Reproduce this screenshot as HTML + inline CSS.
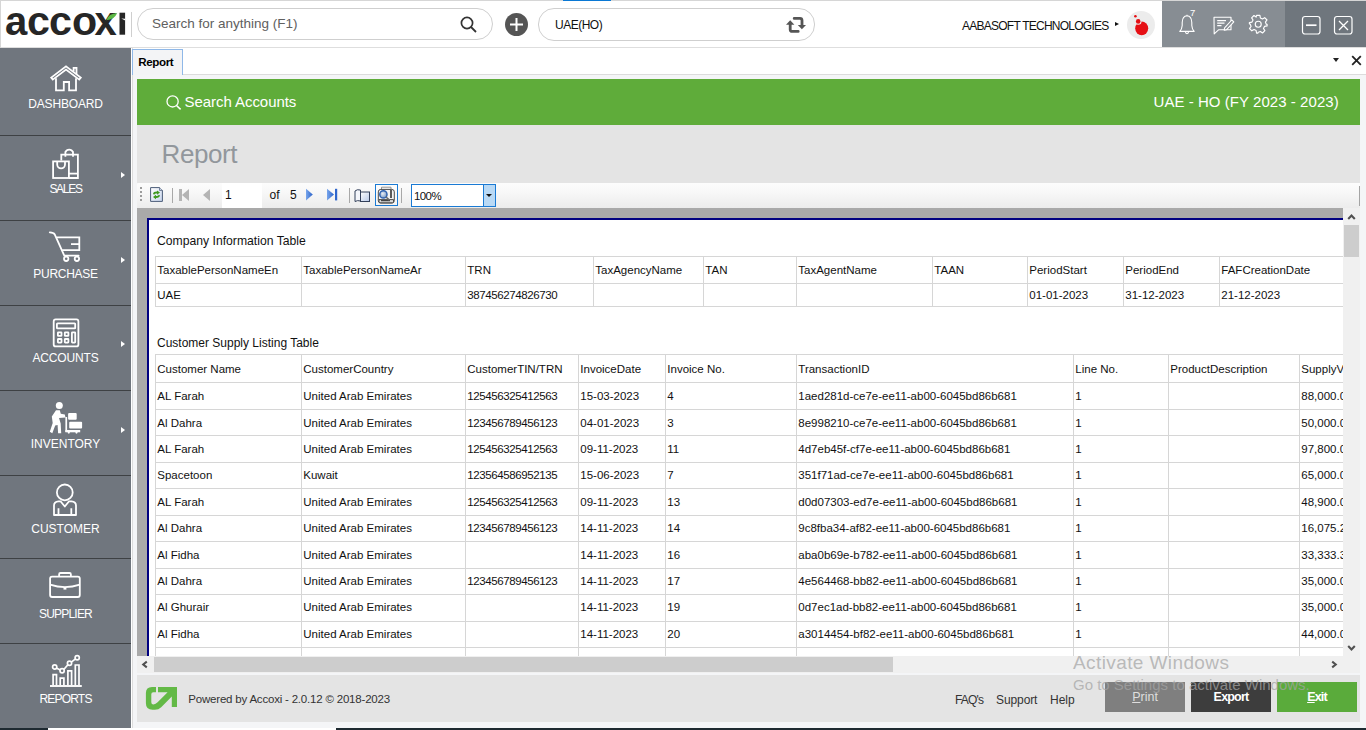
<!DOCTYPE html>
<html><head><meta charset="utf-8">
<style>
*{margin:0;padding:0;box-sizing:border-box}
html,body{width:1366px;height:730px;overflow:hidden;background:#fff;font-family:"Liberation Sans",sans-serif;color:#222}
.a{position:absolute}
#hdr{left:0;top:0;width:1366px;height:48px;background:#fff;border-top:1px solid #d6d6d6;border-bottom:1px solid #dedede}
#side{left:0;top:48px;width:131px;height:680px;background:#70767e}
.si{position:absolute;left:0;width:131px;height:85px;color:#fff;text-align:center;font-size:12px}
.dv{position:absolute;left:0;width:131px;height:1px;background:#3e4144}
.lbl{position:absolute;left:0;width:131px;text-align:center;font-size:12px;color:#fff;line-height:12px}
.arr{position:absolute;left:120.8px;width:0;height:0;border-top:3.8px solid transparent;border-bottom:3.8px solid transparent;border-left:4.8px solid #fff}
.cell{position:absolute;font-size:11.5px;color:#111;white-space:nowrap;line-height:12px}
</style></head><body>
<!-- HEADER -->
<div id="hdr" class="a"></div>
<div class="a" style="left:0;top:0;width:1px;height:48px;background:#d6d6d6"></div>
<div class="a" style="left:563px;top:0;width:48px;height:1px;background:#0a78d4"></div>
<!-- logo -->
<div class="a" style="left:4.9px;top:-3px;font:700 40px/48px 'Liberation Sans',sans-serif;color:#262626">a</div>
<div class="a" style="left:27.3px;top:-3px;font:700 40px/48px 'Liberation Sans',sans-serif;color:#262626;transform:scaleX(1.03);transform-origin:left">c</div>
<div class="a" style="left:49.3px;top:-3px;font:700 40px/48px 'Liberation Sans',sans-serif;color:#262626;transform:scaleX(1.03);transform-origin:left">c</div>
<div class="a" style="left:71.5px;top:-3px;font:700 40px/48px 'Liberation Sans',sans-serif;color:#262626;transform:scaleX(1.03);transform-origin:left">o</div>
<div class="a" style="left:94.4px;top:-3px;font:700 40px/48px 'Liberation Sans',sans-serif;color:#262626">x</div>
<svg class="a" style="left:100px;top:8px" width="30" height="30" viewBox="100 8 30 30">
 <path d="M106.3 20.2 Q108.5 13.5 117.2 13 Q114.5 19.6 106.3 20.2 Z" fill="#5cb845"/>
 <rect x="119.5" y="12.7" width="5.6" height="22" fill="#262626"/>
 <path d="M121.3 18.4 L125.2 18.8 V20.6 Z" fill="#fff"/>
</svg>
<div class="a" style="left:131px;top:12px;width:1px;height:25px;background:#cfcfcf"></div>
<!-- search -->
<div class="a" style="left:137px;top:8px;width:356px;height:32px;border:1px solid #cfcfcf;border-radius:16px"></div>
<div class="a" style="left:152px;top:16px;font-size:13.5px;color:#606060;line-height:16px">Search for anything (F1)</div>
<svg class="a" style="left:460px;top:16px" width="18" height="17" viewBox="0 0 18 17"><circle cx="7" cy="7" r="5.6" fill="none" stroke="#333" stroke-width="1.7"/><line x1="11" y1="11" x2="16" y2="16" stroke="#333" stroke-width="1.8"/></svg>
<!-- plus -->
<svg class="a" style="left:505px;top:13px" width="23" height="23" viewBox="0 0 23 23"><circle cx="11.5" cy="11.5" r="11.5" fill="#555"/><rect x="5" y="10.5" width="13" height="2" fill="#fff"/><rect x="10.5" y="5" width="2" height="13" fill="#fff"/></svg>
<!-- branch -->
<div class="a" style="left:538px;top:8px;width:277px;height:33px;border:1px solid #cfcfcf;border-radius:16px"></div>
<div class="a" style="left:555px;top:18px;font-size:12px;color:#111;line-height:14px;letter-spacing:-0.5px">UAE(HO)</div>
<svg class="a" style="left:782px;top:12px" width="28" height="26" viewBox="0 0 28 26">
 <path d="M16.2 19.4 H10.2 Q8.2 19.4 8.2 17.4 V12" fill="none" stroke="#555" stroke-width="2.8" stroke-linecap="round"/>
 <path d="M4 12.8 L8.2 8.2 L12.4 12.8 Z" fill="#555"/>
 <path d="M12.2 6.4 H18 Q20 6.4 20 8.4 V13.5" fill="none" stroke="#555" stroke-width="2.8" stroke-linecap="round"/>
 <path d="M15.8 13 L24 13 L19.9 17.3 Z" fill="#555"/>
</svg>
<!-- company -->
<div class="a" style="left:962px;top:18.5px;font-size:12px;color:#111;line-height:14px;letter-spacing:-0.75px">AABASOFT TECHNOLOGIES</div>
<div class="a" style="left:1115px;top:22px;width:0;height:0;border-top:2.5px solid transparent;border-bottom:2.5px solid transparent;border-left:4px solid #111"></div>
<div class="a" style="left:1127px;top:11px;width:28px;height:28px;border-radius:50%;background:#ececec"></div>
<svg class="a" style="left:1127px;top:11px" width="28" height="28" viewBox="0 0 28 28"><ellipse cx="14.7" cy="17.3" rx="6.5" ry="6.9" fill="#e60f14"/><circle cx="11.2" cy="10.4" r="3.3" fill="#ececec"/><circle cx="11.2" cy="10.4" r="2.3" fill="#e60f14"/><circle cx="8.4" cy="5.2" r="1.3" fill="#e60f14"/></svg>
<!-- right panels -->
<div class="a" style="left:1162px;top:1px;width:123px;height:46px;background:#878d93"></div>
<div class="a" style="left:1285px;top:1px;width:81px;height:46px;background:#6f767d"></div>
<svg class="a" style="left:1176px;top:12px" width="22" height="24" viewBox="0 0 22 24" fill="none" stroke="#fff" stroke-width="1.1">
 <path d="M11 3.8 Q15.6 4.2 15.8 10.5 V13.5 Q16 17 18.2 19.4 H3.8 Q6 17 6.2 13.5 V10.5 Q6.4 4.2 11 3.8 Z" stroke-linejoin="round"/>
 <path d="M11 2.8 V3.8 M9.4 19.6 Q9.6 21.6 11 21.6 Q12.4 21.6 12.6 19.6"/>
</svg>
<div class="a" style="left:1190px;top:7.5px;font-size:9.5px;line-height:9.5px;color:#fff">7</div>
<svg class="a" style="left:1212px;top:15px" width="24" height="22" viewBox="0 0 24 22" fill="none" stroke="#fff" stroke-width="1.1">
 <path d="M2 2.2 H19 V14.8 H6.5 L2.2 18.8 Z" stroke-linejoin="round"/>
 <path d="M5.2 5.6 H14 M5.2 8.1 H12.5 M5.2 10.6 H9.5" stroke-width="1.3"/>
 <path d="M12.6 12.8 L19.8 5 L21.8 6.9 L14.6 14.6 L12.2 15.2 Z" fill="#878d93" stroke-linejoin="round"/>
</svg>
<svg class="a" style="left:1248.3px;top:14.2px" width="20.5" height="20.5" viewBox="0 0 22 22" fill="none" stroke="#fff" stroke-width="1.25">
 <path d="M9.2 1.5 H12.8 L13.3 4.3 L15.5 5.4 L17.9 3.9 L20.4 6.4 L18.7 8.7 L19.6 11 L20.5 11 L20.5 11 L20.5 12.8 L17.7 13.3 L16.6 15.5 L18.1 17.9 L15.6 20.4 L13.3 18.7 L11 19.6 L10.5 20.5 L9.2 20.5 L8.7 17.7 L6.5 16.6 L4.1 18.1 L1.6 15.6 L3.3 13.3 L2.4 11 L1.5 10.5 L1.5 9.2 L4.3 8.7 L5.4 6.5 L3.9 4.1 L6.4 1.6 L8.7 3.3 Z" stroke-linejoin="round"/>
 <circle cx="11" cy="11" r="3.2"/>
</svg>
<svg class="a" style="left:1301px;top:15px" width="21" height="21" viewBox="0 0 21 21" fill="none" stroke="#fff" stroke-width="1.2">
 <rect x="1.5" y="1.5" width="17.5" height="17.5" rx="2.5"/>
 <path d="M5 10.2 H15.5" stroke-width="1.7"/>
</svg>
<svg class="a" style="left:1333px;top:15px" width="21" height="21" viewBox="0 0 21 21" fill="none" stroke="#fff" stroke-width="1.2">
 <rect x="1.5" y="1.5" width="17.5" height="17.5" rx="2.5"/>
 <path d="M6 6 L15 15 M15 6 L6 15" stroke-width="1.3"/>
</svg>

<!-- SIDEBAR -->
<div id="side" class="a"></div>
<!-- SIDEBAR ITEMS -->
<div class="dv" style="top:135px"></div>
<div class="dv" style="top:220px"></div>
<div class="dv" style="top:305px"></div>
<div class="dv" style="top:390px"></div>
<div class="dv" style="top:475px"></div>
<div class="dv" style="top:558px"></div>
<div class="dv" style="top:643px"></div>
<svg class="a" style="left:44px;top:60px" width="44" height="40" viewBox="0 0 44 40" fill="none" stroke="#fff" stroke-width="1.8">
 <path d="M7.2 17.6 L22 6.3 L36.8 17.6 L35.2 19.6 L22 9.6 L8.8 19.6 Z" stroke-linejoin="miter"/>
 <path d="M29.6 11.6 V7.8 H32.5 V14"/>
 <path d="M12 18.2 V30.4 H19.8 V22 H25.1 V30.4 H32 V18.2"/>
</svg>
<div class="lbl" style="top:98px;letter-spacing:-0.15px">DASHBOARD</div>

<svg class="a" style="left:44px;top:143px" width="44" height="40" viewBox="0 0 44 40" fill="none" stroke="#fff" stroke-width="1.8">
 <path d="M17.3 17.5 V11.6 H33.9 V35 H24.9"/>
 <path d="M21.4 13.7 V9 A4.2 4.2 0 0 1 29 9 V13.7"/>
 <rect x="9.1" y="18.4" width="15.8" height="16.6"/>
 <path d="M13.2 18.4 V21.5 A3.9 3.9 0 0 0 21 21.5 V18.4"/>
 <path d="M24.9 30.6 H33.9"/>
</svg>
<div class="lbl" style="top:183px;letter-spacing:-1.3px">SALES</div>
<div class="arr" style="top:171.6px"></div>

<svg class="a" style="left:44px;top:226px" width="44" height="40" viewBox="0 0 44 40" fill="none" stroke="#fff" stroke-width="1.8" stroke-linecap="round">
 <path d="M5.8 6.4 Q9.6 6.6 10.6 8.2 L20.3 29.6 H34.6" stroke-linejoin="round"/>
 <path d="M12.4 11.4 H35.3 V24.2 H18.2" stroke-linecap="butt"/>
 <path d="M27 18.1 H35.3" stroke-linecap="butt"/>
 <circle cx="22.2" cy="32.8" r="2.2"/>
 <circle cx="32.9" cy="32.8" r="2.2"/>
</svg>
<div class="lbl" style="top:267.5px;letter-spacing:-0.3px">PURCHASE</div>
<div class="arr" style="top:256.5px"></div>

<svg class="a" style="left:44px;top:313px" width="44" height="40" viewBox="0 0 44 40" fill="none" stroke="#fff" stroke-width="1.8">
 <rect x="9.7" y="6.4" width="24.7" height="27" rx="2"/>
 <rect x="12.9" y="10.4" width="18.3" height="4.9" rx="0.6"/>
 <rect x="13.9" y="19.3" width="3.6" height="3.6" rx="0.5"/>
 <rect x="20.8" y="19.3" width="3.6" height="3.6" rx="0.5"/>
 <rect x="13.9" y="26" width="3.6" height="3.6" rx="0.5"/>
 <rect x="20.8" y="26" width="3.6" height="3.6" rx="0.5"/>
 <rect x="27.9" y="19.3" width="3.3" height="10.3" rx="0.5"/>
</svg>
<div class="lbl" style="top:352px;letter-spacing:-0.15px">ACCOUNTS</div>
<div class="arr" style="top:341.4px"></div>

<svg class="a" style="left:44px;top:396px" width="44" height="40" viewBox="0 0 44 40" fill="#fff" stroke="none">
 <circle cx="15.3" cy="9.4" r="3.5"/>
 <path d="M12 14.2 L15.8 14.2 L16.8 17.8 L20.8 18.5 L21.5 21.5 L15 22 L16.7 27.5 L17.2 37.2 L14.1 37.2 L13.6 29 L11.2 29.5 L8.3 37.3 L5.8 35.8 L8.7 27 L7.8 20.5 Z"/>
 <rect x="21.4" y="21" width="1.7" height="15"/>
 <rect x="24.1" y="17" width="8.6" height="6.8" rx="1"/>
 <rect x="25.2" y="25.8" width="12.9" height="6.8" rx="1"/>
 <rect x="21.4" y="34" width="14.8" height="2.3"/>
 <circle cx="24.8" cy="36.6" r="1.1"/>
 <circle cx="32.5" cy="36.6" r="1.1"/>
</svg>
<div class="lbl" style="top:437.5px;letter-spacing:0px">INVENTORY</div>
<div class="arr" style="top:427px"></div>

<svg class="a" style="left:44px;top:480px" width="44" height="40" viewBox="0 0 44 40" fill="none" stroke="#fff" stroke-width="1.8">
 <circle cx="20.8" cy="12.4" r="7.9"/>
 <path d="M10 35 V25.5 Q10 21.6 14.5 21.3 H16.5 L20.8 26.5 L25.1 21.3 H27.5 Q32 21.6 32 25.5 V35 Z" stroke-linejoin="round"/>
 <path d="M14.5 28.2 V35 M27.3 28.2 V35"/>
</svg>
<div class="lbl" style="top:522.5px;letter-spacing:0px">CUSTOMER</div>

<svg class="a" style="left:44px;top:565px" width="44" height="40" viewBox="0 0 44 40" fill="none" stroke="#fff" stroke-width="1.8">
 <rect x="6.1" y="11.6" width="29.7" height="20.4" rx="2"/>
 <path d="M15.1 11.4 V9.4 Q15.1 8 16.5 8 H25.5 Q26.9 8 26.9 9.4 V11.4"/>
 <path d="M6.1 19.6 Q20.9 24.6 35.8 19.6"/>
 <rect x="19.5" y="22" width="2.9" height="2.6" fill="#fff" stroke="none"/>
</svg>
<div class="lbl" style="top:607.5px;letter-spacing:-0.8px">SUPPLIER</div>

<svg class="a" style="left:44px;top:650px" width="44" height="40" viewBox="0 0 44 40" fill="none" stroke="#fff" stroke-width="1.7">
 <path d="M6 36 H37.8" stroke-width="1.9"/>
 <path d="M9.1 35 V24.6 H12.5 V35"/>
 <path d="M16.2 35 V28.2 H19.9 V35"/>
 <path d="M23.9 35 V20.8 H27.6 V35"/>
 <path d="M31.3 35 V15 H35 V35"/>
 <path d="M12.3 18 L16.3 19.9 M19.8 19.5 L23.9 14.7 M27.3 12.1 L31.5 8.9"/>
 <circle cx="10.7" cy="17" r="2.1"/>
 <circle cx="18.1" cy="20.8" r="2.1"/>
 <circle cx="25.5" cy="13.2" r="2.1"/>
 <circle cx="33.2" cy="7.7" r="2.1"/>
</svg>
<div class="lbl" style="top:692.5px;letter-spacing:-0.8px">REPORTS</div>


<!-- MAIN -->
<div class="a" style="left:131px;top:48px;width:1px;height:680px;background:#fff"></div>
<div class="a" style="left:132px;top:48px;width:1px;height:680px;background:#dcdcdc"></div>
<div class="a" style="left:133px;top:48px;width:1233px;height:680px;background:#f4f5f7"></div>
<!-- tab strip -->
<div class="a" style="left:133px;top:48px;width:1233px;height:27px;background:#fff;border-bottom:1px solid #dcdcdc"></div>
<div class="a" style="left:132px;top:49px;width:51px;height:26px;background:#f3f4f6;border:1px solid #8fb8e8;border-bottom:none"></div>
<div class="a" style="left:138.3px;top:55.6px;font-size:11.6px;font-weight:700;color:#000;line-height:12px;letter-spacing:-0.4px">Report</div>
<div class="a" style="left:1332.5px;top:58px;width:0;height:0;border-left:3.5px solid transparent;border-right:3.5px solid transparent;border-top:4px solid #222"></div>
<svg class="a" style="left:1351px;top:55px" width="11" height="11" viewBox="0 0 11 11" stroke="#222" stroke-width="1.8"><path d="M1.2 1.2 L9.8 9.8 M9.8 1.2 L1.2 9.8"/></svg>

<!-- green bar -->
<div class="a" style="left:137px;top:79px;width:1223px;height:46px;background:#5fac3a"></div>
<svg class="a" style="left:165px;top:94px" width="18" height="17" viewBox="0 0 18 17" fill="none" stroke="#fff" stroke-width="1.3"><circle cx="7.6" cy="7.4" r="5.6"/><line x1="11.5" y1="11.5" x2="15.6" y2="15.4" stroke-width="1.5"/></svg>
<div class="a" style="left:184.5px;top:93.8px;font-size:15px;line-height:15px;color:#fff;letter-spacing:-0.05px">Search Accounts</div>
<div class="a" style="left:1153.5px;top:94.2px;font-size:15px;line-height:15px;color:#fff;letter-spacing:0.05px">UAE - HO (FY 2023 - 2023)</div>
<!-- gray area -->
<div class="a" style="left:137px;top:125px;width:1223px;height:58px;background:#e4e4e4"></div>
<div class="a" style="left:161.5px;top:139.3px;font-size:26px;color:#92979c;line-height:30px;letter-spacing:-0.4px">Report</div>
<!-- toolbar -->
<div class="a" style="left:137px;top:183px;width:1223px;height:25px;background:linear-gradient(#fcfcfc,#f7f7f7 40%,#ececec);border-radius:2px 0 0 0"></div>
<div class="a" style="left:1359px;top:186px;width:1px;height:20px;background:#a4a4a4"></div>
<div class="a" style="left:140px;top:187px;width:2px;height:2px;background:#9c9c9c;box-shadow:0 4px 0 #9c9c9c,0 8px 0 #9c9c9c,0 12px 0 #9c9c9c"></div>
<svg class="a" style="left:150px;top:187px" width="14" height="16" viewBox="0 0 14 16">
 <defs><linearGradient id="dg" x1="0" y1="0" x2="1" y2="1"><stop offset="0" stop-color="#ffffff"/><stop offset="1" stop-color="#c9d6ee"/></linearGradient></defs>
 <path d="M0.6 0.6 H9.6 L12.4 3.4 V14.4 H0.6 Z" fill="url(#dg)" stroke="#4b5c78" stroke-width="1"/>
 <path d="M9.6 0.6 V3.4 H12.4" fill="#dfe6f3" stroke="#4b5c78" stroke-width="0.8"/>
 <path d="M3 7 Q3.5 4.5 7 4.6 L7 3.4 L10 5.6 L7 7.8 L7 6.5 Q4.5 6.4 4.3 7.8 Z" fill="#3f9a1f"/>
 <path d="M10 8.6 Q9.5 11.1 6 11 L6 12.2 L3 10 L6 7.8 L6 9.1 Q8.5 9.2 8.7 7.8 Z" fill="#3f9a1f"/>
</svg>
<div class="a" style="left:172px;top:188px;width:1px;height:14.5px;background:#a8a8a8"></div>
<div class="a" style="left:179px;top:188.5px;width:3px;height:12px;background:#b4b4b4"></div>
<div class="a" style="left:182px;top:188.5px;width:0;height:0;border-top:6px solid transparent;border-bottom:6px solid transparent;border-right:7px solid #b4b4b4"></div>
<div class="a" style="left:203px;top:188.8px;width:0;height:0;border-top:6px solid transparent;border-bottom:6px solid transparent;border-right:7px solid #b4b4b4"></div>
<div class="a" style="left:222px;top:183px;width:40px;height:25px;background:#fff"></div>
<div class="a" style="left:225px;top:189px;font-size:12px;line-height:12px;color:#111">1</div>
<div class="a" style="left:269.5px;top:189px;font-size:12px;line-height:12px;color:#111">of</div>
<div class="a" style="left:290px;top:189px;font-size:12px;line-height:12px;color:#111">5</div>
<svg class="a" style="left:305px;top:188px" width="34" height="14" viewBox="0 0 34 14">
 <defs><linearGradient id="bg1" x1="0" y1="0" x2="1" y2="0"><stop offset="0" stop-color="#7aa7ec"/><stop offset="1" stop-color="#2a62c9"/></linearGradient></defs>
 <path d="M1 0.8 L7.8 6.6 L1 12.4 Z" fill="url(#bg1)"/>
 <path d="M22 0.8 L29 6.6 L22 12.4 Z" fill="url(#bg1)"/>
 <rect x="30" y="0.8" width="2.2" height="11.6" fill="#2f66cc"/>
</svg>
<div class="a" style="left:349px;top:188px;width:1px;height:14.5px;background:#a8a8a8"></div>
<svg class="a" style="left:354px;top:188px" width="17" height="15" viewBox="0 0 17 15">
 <defs><linearGradient id="bk" x1="0" y1="0" x2="1" y2="1"><stop offset="0" stop-color="#ffffff"/><stop offset="1" stop-color="#b8c9e8"/></linearGradient></defs>
 <path d="M1 3 Q3 1 6.5 2 V13 Q3.5 12 1 13.5 Z" fill="#f4f6fb" stroke="#33405a" stroke-width="1"/>
 <rect x="6.5" y="4" width="9" height="9.5" fill="url(#bk)" stroke="#33405a" stroke-width="1"/>
</svg>
<div class="a" style="left:375px;top:184px;width:23px;height:22px;border:1px solid #1a7ad4;background:rgba(255,255,255,0.4)"></div>
<svg class="a" style="left:376px;top:185px" width="21" height="20" viewBox="0 0 21 20">
 <defs><radialGradient id="lg" cx="0.4" cy="0.4" r="0.6"><stop offset="0" stop-color="#e8eef6"/><stop offset="1" stop-color="#7f9cc4"/></radialGradient></defs>
 <path d="M5.5 5 V2.2 H15 V5" fill="#f6f6f6" stroke="#8a8a8a" stroke-width="0.9"/>
 <rect x="2.3" y="4.4" width="16" height="13.6" rx="2.5" fill="#f3f3f3" stroke="#4a4a4a" stroke-width="1"/>
 <path d="M3 14.6 H17.5 V16.8 Q17.5 17.8 16.5 17.8 H4 Q3 17.8 3 16.8 Z" fill="#dcdcdc" stroke="#3a3a3a" stroke-width="0.9"/>
 <rect x="5" y="15.2" width="9" height="1" fill="#222"/>
 <rect x="14.2" y="5" width="1.6" height="8" fill="#333"/>
 <circle cx="7.4" cy="9.4" r="3.6" fill="url(#lg)" stroke="#2f62b0" stroke-width="1.5"/>
 <path d="M10 12 L13.5 15.2" stroke="#6a6a6a" stroke-width="1.6"/>
</svg>
<div class="a" style="left:401px;top:188px;width:1px;height:14.5px;background:#a8a8a8"></div>
<div class="a" style="left:411px;top:184px;width:85px;height:23px;border:1px solid #1a7ad4;background:#fff"></div>
<div class="a" style="left:483px;top:185px;width:12px;height:21px;background:#b9d9f5;border-left:1px solid #1a7ad4"></div>
<div class="a" style="left:486px;top:194px;width:0;height:0;border-left:3.5px solid transparent;border-right:3.5px solid transparent;border-top:3.5px solid #111"></div>
<div class="a" style="left:414px;top:189.5px;font-size:11.5px;line-height:12px;color:#111;letter-spacing:-0.6px">100%</div>
<!-- report view -->
<div class="a" style="left:137px;top:208px;width:1206px;height:447.5px;background:#a9a9a9;overflow:hidden">
  <div class="a" style="left:10px;top:10px;width:1300px;height:500px;background:#fff;border-left:2px solid #000080;border-top:2px solid #000080"></div>
<div class="cell" style="left:20.0px;top:27.0px;font-size:12.2px;">Company Information Table</div>
<div class="a" style="left:18.0px;top:48.0px;width:1245.0px;height:1px;background:#d6d6d6"></div>
<div class="a" style="left:18.0px;top:75.0px;width:1245.0px;height:1px;background:#d6d6d6"></div>
<div class="a" style="left:18.0px;top:98.0px;width:1245.0px;height:1px;background:#d6d6d6"></div>
<div class="a" style="left:18.0px;top:48.0px;width:1px;height:50.0px;background:#d6d6d6"></div>
<div class="a" style="left:164.0px;top:48.0px;width:1px;height:50.0px;background:#d6d6d6"></div>
<div class="a" style="left:328.0px;top:48.0px;width:1px;height:50.0px;background:#d6d6d6"></div>
<div class="a" style="left:456.0px;top:48.0px;width:1px;height:50.0px;background:#d6d6d6"></div>
<div class="a" style="left:566.0px;top:48.0px;width:1px;height:50.0px;background:#d6d6d6"></div>
<div class="a" style="left:659.0px;top:48.0px;width:1px;height:50.0px;background:#d6d6d6"></div>
<div class="a" style="left:795.0px;top:48.0px;width:1px;height:50.0px;background:#d6d6d6"></div>
<div class="a" style="left:890.0px;top:48.0px;width:1px;height:50.0px;background:#d6d6d6"></div>
<div class="a" style="left:986.0px;top:48.0px;width:1px;height:50.0px;background:#d6d6d6"></div>
<div class="a" style="left:1082.0px;top:48.0px;width:1px;height:50.0px;background:#d6d6d6"></div>
<div class="cell" style="left:20.3px;top:56.3px;font-size:11.5px;">TaxablePersonNameEn</div>
<div class="cell" style="left:20.3px;top:81.3px;font-size:11.5px;">UAE</div>
<div class="cell" style="left:166.3px;top:56.3px;font-size:11.5px;">TaxablePersonNameAr</div>
<div class="cell" style="left:330.3px;top:56.3px;font-size:11.5px;">TRN</div>
<div class="cell" style="left:330.3px;top:81.3px;font-size:11.5px;letter-spacing:-0.4px;">387456274826730</div>
<div class="cell" style="left:458.3px;top:56.3px;font-size:11.5px;">TaxAgencyName</div>
<div class="cell" style="left:568.3px;top:56.3px;font-size:11.5px;">TAN</div>
<div class="cell" style="left:661.3px;top:56.3px;font-size:11.5px;">TaxAgentName</div>
<div class="cell" style="left:797.3px;top:56.3px;font-size:11.5px;">TAAN</div>
<div class="cell" style="left:892.3px;top:56.3px;font-size:11.5px;">PeriodStart</div>
<div class="cell" style="left:892.3px;top:81.3px;font-size:11.5px;">01-01-2023</div>
<div class="cell" style="left:988.3px;top:56.3px;font-size:11.5px;">PeriodEnd</div>
<div class="cell" style="left:988.3px;top:81.3px;font-size:11.5px;">31-12-2023</div>
<div class="cell" style="left:1084.3px;top:56.3px;font-size:11.5px;">FAFCreationDate</div>
<div class="cell" style="left:1084.3px;top:81.3px;font-size:11.5px;">21-12-2023</div>
<div class="cell" style="left:20.0px;top:128.6px;font-size:12px;">Customer Supply Listing Table</div>
<div class="a" style="left:18.0px;top:146.0px;width:1245.0px;height:1px;background:#d6d6d6"></div>
<div class="a" style="left:18.0px;top:174.0px;width:1245.0px;height:1px;background:#d6d6d6"></div>
<div class="a" style="left:18.0px;top:201.0px;width:1245.0px;height:1px;background:#d6d6d6"></div>
<div class="a" style="left:18.0px;top:227.0px;width:1245.0px;height:1px;background:#d6d6d6"></div>
<div class="a" style="left:18.0px;top:254.0px;width:1245.0px;height:1px;background:#d6d6d6"></div>
<div class="a" style="left:18.0px;top:280.0px;width:1245.0px;height:1px;background:#d6d6d6"></div>
<div class="a" style="left:18.0px;top:307.0px;width:1245.0px;height:1px;background:#d6d6d6"></div>
<div class="a" style="left:18.0px;top:333.0px;width:1245.0px;height:1px;background:#d6d6d6"></div>
<div class="a" style="left:18.0px;top:360.0px;width:1245.0px;height:1px;background:#d6d6d6"></div>
<div class="a" style="left:18.0px;top:386.0px;width:1245.0px;height:1px;background:#d6d6d6"></div>
<div class="a" style="left:18.0px;top:413.0px;width:1245.0px;height:1px;background:#d6d6d6"></div>
<div class="a" style="left:18.0px;top:439.0px;width:1245.0px;height:1px;background:#d6d6d6"></div>
<div class="a" style="left:18.0px;top:466.0px;width:1245.0px;height:1px;background:#d6d6d6"></div>
<div class="a" style="left:18.0px;top:146.0px;width:1px;height:346.0px;background:#d6d6d6"></div>
<div class="a" style="left:164.0px;top:146.0px;width:1px;height:346.0px;background:#d6d6d6"></div>
<div class="a" style="left:328.0px;top:146.0px;width:1px;height:346.0px;background:#d6d6d6"></div>
<div class="a" style="left:441.0px;top:146.0px;width:1px;height:346.0px;background:#d6d6d6"></div>
<div class="a" style="left:528.0px;top:146.0px;width:1px;height:346.0px;background:#d6d6d6"></div>
<div class="a" style="left:659.0px;top:146.0px;width:1px;height:346.0px;background:#d6d6d6"></div>
<div class="a" style="left:936.0px;top:146.0px;width:1px;height:346.0px;background:#d6d6d6"></div>
<div class="a" style="left:1031.0px;top:146.0px;width:1px;height:346.0px;background:#d6d6d6"></div>
<div class="a" style="left:1162.0px;top:146.0px;width:1px;height:346.0px;background:#d6d6d6"></div>
<div class="cell" style="left:20.3px;top:155.3px;font-size:11.5px;">Customer Name</div>
<div class="cell" style="left:166.3px;top:155.3px;font-size:11.5px;">CustomerCountry</div>
<div class="cell" style="left:330.3px;top:155.3px;font-size:11.5px;">CustomerTIN/TRN</div>
<div class="cell" style="left:443.3px;top:155.3px;font-size:11.5px;">InvoiceDate</div>
<div class="cell" style="left:530.3px;top:155.3px;font-size:11.5px;">Invoice No.</div>
<div class="cell" style="left:661.3px;top:155.3px;font-size:11.5px;">TransactionID</div>
<div class="cell" style="left:938.3px;top:155.3px;font-size:11.5px;">Line No.</div>
<div class="cell" style="left:1033.3px;top:155.3px;font-size:11.5px;">ProductDescription</div>
<div class="cell" style="left:1164.3px;top:155.3px;font-size:11.5px;">SupplyValue</div>
<div class="cell" style="left:20.3px;top:182.2px;font-size:11.5px;">AL Farah</div>
<div class="cell" style="left:166.3px;top:182.2px;font-size:11.5px;">United Arab Emirates</div>
<div class="cell" style="left:330.3px;top:182.2px;font-size:11.5px;letter-spacing:-0.4px;">125456325412563</div>
<div class="cell" style="left:443.3px;top:182.2px;font-size:11.5px;">15-03-2023</div>
<div class="cell" style="left:530.3px;top:182.2px;font-size:11.5px;">4</div>
<div class="cell" style="left:661.3px;top:182.2px;font-size:11.5px;">1aed281d-ce7e-ee11-ab00-6045bd86b681</div>
<div class="cell" style="left:938.3px;top:182.2px;font-size:11.5px;">1</div>
<div class="cell" style="left:1164.3px;top:182.2px;font-size:11.5px;">88,000.00</div>
<div class="cell" style="left:20.3px;top:208.6px;font-size:11.5px;">Al Dahra</div>
<div class="cell" style="left:166.3px;top:208.6px;font-size:11.5px;">United Arab Emirates</div>
<div class="cell" style="left:330.3px;top:208.6px;font-size:11.5px;letter-spacing:-0.4px;">123456789456123</div>
<div class="cell" style="left:443.3px;top:208.6px;font-size:11.5px;">04-01-2023</div>
<div class="cell" style="left:530.3px;top:208.6px;font-size:11.5px;">3</div>
<div class="cell" style="left:661.3px;top:208.6px;font-size:11.5px;">8e998210-ce7e-ee11-ab00-6045bd86b681</div>
<div class="cell" style="left:938.3px;top:208.6px;font-size:11.5px;">1</div>
<div class="cell" style="left:1164.3px;top:208.6px;font-size:11.5px;">50,000.00</div>
<div class="cell" style="left:20.3px;top:235.0px;font-size:11.5px;">AL Farah</div>
<div class="cell" style="left:166.3px;top:235.0px;font-size:11.5px;">United Arab Emirates</div>
<div class="cell" style="left:330.3px;top:235.0px;font-size:11.5px;letter-spacing:-0.4px;">125456325412563</div>
<div class="cell" style="left:443.3px;top:235.0px;font-size:11.5px;">09-11-2023</div>
<div class="cell" style="left:530.3px;top:235.0px;font-size:11.5px;">11</div>
<div class="cell" style="left:661.3px;top:235.0px;font-size:11.5px;">4d7eb45f-cf7e-ee11-ab00-6045bd86b681</div>
<div class="cell" style="left:938.3px;top:235.0px;font-size:11.5px;">1</div>
<div class="cell" style="left:1164.3px;top:235.0px;font-size:11.5px;">97,800.00</div>
<div class="cell" style="left:20.3px;top:261.4px;font-size:11.5px;">Spacetoon</div>
<div class="cell" style="left:166.3px;top:261.4px;font-size:11.5px;">Kuwait</div>
<div class="cell" style="left:330.3px;top:261.4px;font-size:11.5px;letter-spacing:-0.4px;">123564586952135</div>
<div class="cell" style="left:443.3px;top:261.4px;font-size:11.5px;">15-06-2023</div>
<div class="cell" style="left:530.3px;top:261.4px;font-size:11.5px;">7</div>
<div class="cell" style="left:661.3px;top:261.4px;font-size:11.5px;">351f71ad-ce7e-ee11-ab00-6045bd86b681</div>
<div class="cell" style="left:938.3px;top:261.4px;font-size:11.5px;">1</div>
<div class="cell" style="left:1164.3px;top:261.4px;font-size:11.5px;">65,000.00</div>
<div class="cell" style="left:20.3px;top:287.8px;font-size:11.5px;">AL Farah</div>
<div class="cell" style="left:166.3px;top:287.8px;font-size:11.5px;">United Arab Emirates</div>
<div class="cell" style="left:330.3px;top:287.8px;font-size:11.5px;letter-spacing:-0.4px;">125456325412563</div>
<div class="cell" style="left:443.3px;top:287.8px;font-size:11.5px;">09-11-2023</div>
<div class="cell" style="left:530.3px;top:287.8px;font-size:11.5px;">13</div>
<div class="cell" style="left:661.3px;top:287.8px;font-size:11.5px;">d0d07303-ed7e-ee11-ab00-6045bd86b681</div>
<div class="cell" style="left:938.3px;top:287.8px;font-size:11.5px;">1</div>
<div class="cell" style="left:1164.3px;top:287.8px;font-size:11.5px;">48,900.00</div>
<div class="cell" style="left:20.3px;top:314.2px;font-size:11.5px;">Al Dahra</div>
<div class="cell" style="left:166.3px;top:314.2px;font-size:11.5px;">United Arab Emirates</div>
<div class="cell" style="left:330.3px;top:314.2px;font-size:11.5px;letter-spacing:-0.4px;">123456789456123</div>
<div class="cell" style="left:443.3px;top:314.2px;font-size:11.5px;">14-11-2023</div>
<div class="cell" style="left:530.3px;top:314.2px;font-size:11.5px;">14</div>
<div class="cell" style="left:661.3px;top:314.2px;font-size:11.5px;">9c8fba34-af82-ee11-ab00-6045bd86b681</div>
<div class="cell" style="left:938.3px;top:314.2px;font-size:11.5px;">1</div>
<div class="cell" style="left:1164.3px;top:314.2px;font-size:11.5px;">16,075.20</div>
<div class="cell" style="left:20.3px;top:340.6px;font-size:11.5px;">Al Fidha</div>
<div class="cell" style="left:166.3px;top:340.6px;font-size:11.5px;">United Arab Emirates</div>
<div class="cell" style="left:443.3px;top:340.6px;font-size:11.5px;">14-11-2023</div>
<div class="cell" style="left:530.3px;top:340.6px;font-size:11.5px;">16</div>
<div class="cell" style="left:661.3px;top:340.6px;font-size:11.5px;">aba0b69e-b782-ee11-ab00-6045bd86b681</div>
<div class="cell" style="left:938.3px;top:340.6px;font-size:11.5px;">1</div>
<div class="cell" style="left:1164.3px;top:340.6px;font-size:11.5px;">33,333.30</div>
<div class="cell" style="left:20.3px;top:367.0px;font-size:11.5px;">Al Dahra</div>
<div class="cell" style="left:166.3px;top:367.0px;font-size:11.5px;">United Arab Emirates</div>
<div class="cell" style="left:330.3px;top:367.0px;font-size:11.5px;letter-spacing:-0.4px;">123456789456123</div>
<div class="cell" style="left:443.3px;top:367.0px;font-size:11.5px;">14-11-2023</div>
<div class="cell" style="left:530.3px;top:367.0px;font-size:11.5px;">17</div>
<div class="cell" style="left:661.3px;top:367.0px;font-size:11.5px;">4e564468-bb82-ee11-ab00-6045bd86b681</div>
<div class="cell" style="left:938.3px;top:367.0px;font-size:11.5px;">1</div>
<div class="cell" style="left:1164.3px;top:367.0px;font-size:11.5px;">35,000.00</div>
<div class="cell" style="left:20.3px;top:393.4px;font-size:11.5px;">Al Ghurair</div>
<div class="cell" style="left:166.3px;top:393.4px;font-size:11.5px;">United Arab Emirates</div>
<div class="cell" style="left:443.3px;top:393.4px;font-size:11.5px;">14-11-2023</div>
<div class="cell" style="left:530.3px;top:393.4px;font-size:11.5px;">19</div>
<div class="cell" style="left:661.3px;top:393.4px;font-size:11.5px;">0d7ec1ad-bb82-ee11-ab00-6045bd86b681</div>
<div class="cell" style="left:938.3px;top:393.4px;font-size:11.5px;">1</div>
<div class="cell" style="left:1164.3px;top:393.4px;font-size:11.5px;">35,000.00</div>
<div class="cell" style="left:20.3px;top:419.8px;font-size:11.5px;">Al Fidha</div>
<div class="cell" style="left:166.3px;top:419.8px;font-size:11.5px;">United Arab Emirates</div>
<div class="cell" style="left:443.3px;top:419.8px;font-size:11.5px;">14-11-2023</div>
<div class="cell" style="left:530.3px;top:419.8px;font-size:11.5px;">20</div>
<div class="cell" style="left:661.3px;top:419.8px;font-size:11.5px;">a3014454-bf82-ee11-ab00-6045bd86b681</div>
<div class="cell" style="left:938.3px;top:419.8px;font-size:11.5px;">1</div>
<div class="cell" style="left:1164.3px;top:419.8px;font-size:11.5px;">44,000.00</div>
<div class="cell" style="left:20.3px;top:446.2px;font-size:11.5px;">Al Dahra</div>
<div class="cell" style="left:166.3px;top:446.2px;font-size:11.5px;">United Arab Emirates</div>
<div class="cell" style="left:330.3px;top:446.2px;font-size:11.5px;letter-spacing:-0.4px;">123456789456123</div>
<div class="cell" style="left:443.3px;top:446.2px;font-size:11.5px;">14-11-2023</div>
<div class="cell" style="left:530.3px;top:446.2px;font-size:11.5px;">21</div>
<div class="cell" style="left:661.3px;top:446.2px;font-size:11.5px;">7730a171-bb82-ee11-ab00-6045bd86b681</div>
<div class="cell" style="left:938.3px;top:446.2px;font-size:11.5px;">1</div>
<div class="cell" style="left:1164.3px;top:446.2px;font-size:11.5px;">16,075.20</div>
</div>
<!-- v scrollbar -->
<div class="a" style="left:1343px;top:208px;width:17px;height:465px;background:#f0f0f0"></div>
<div class="a" style="left:1344px;top:225px;width:15px;height:32px;background:#cdcdcd"></div>
<svg class="a" style="left:1346px;top:213px" width="11" height="8" viewBox="0 0 11 8" fill="none" stroke="#505050" stroke-width="2.1"><path d="M2.2 6 L5.5 2.6 L8.8 6"/></svg>
<svg class="a" style="left:1346px;top:643.5px" width="11" height="8" viewBox="0 0 11 8" fill="none" stroke="#505050" stroke-width="2.1"><path d="M2.2 2 L5.5 5.4 L8.8 2"/></svg>
<!-- h scrollbar -->
<div class="a" style="left:137px;top:655.5px;width:1206px;height:17.5px;background:#f0f0f0"></div>
<div class="a" style="left:154px;top:657px;width:739px;height:15px;background:#cdcdcd"></div>
<svg class="a" style="left:140px;top:659px" width="10" height="11" viewBox="0 0 10 11" fill="none" stroke="#505050" stroke-width="2"><path d="M6.8 2.6 L3.2 5.5 L6.8 8.4"/></svg>
<svg class="a" style="left:1329px;top:659px" width="10" height="11" viewBox="0 0 10 11" fill="none" stroke="#505050" stroke-width="2"><path d="M3.2 2.6 L6.8 5.5 L3.2 8.4"/></svg>
<!-- footer -->
<div class="a" style="left:137px;top:674.5px;width:1223px;height:47px;background:#e4e4e4"></div>
<svg class="a" style="left:140px;top:680px" width="44" height="36" viewBox="0 0 44 36">
 <path d="M16 6.9 H12 Q5.9 6.9 5.9 13 V23.3 Q5.9 29.8 12.5 29.8 H14.8 Q18.6 29.8 21.2 27.2 L31.8 16.6 V27.1 H37 V6.9 H18 V12.3 H27.6 L17.6 22.3 Q15.6 24.4 13.5 24.4 Q11.3 24.4 11.3 22.2 V14.2 Q11.3 12.3 13.2 12.3 H16 Z" fill="#63b946"/>
</svg>
<div class="a" style="left:188.3px;top:693.2px;font-size:11.5px;line-height:12px;color:#333;letter-spacing:-0.2px">Powered by Accoxi - 2.0.12 © 2018-2023</div>
<div class="a" style="left:955px;top:693.5px;font-size:12px;line-height:12px;color:#333;letter-spacing:-0.8px">FAQ's</div>
<div class="a" style="left:996px;top:693.5px;font-size:12px;line-height:12px;color:#333;letter-spacing:-0.1px">Support</div>
<div class="a" style="left:1050px;top:693.5px;font-size:12px;line-height:12px;color:#333">Help</div>
<div class="a" style="left:1105px;top:682px;width:80px;height:30px;background:#7f7f7f;color:#dedede;font-size:12.5px;line-height:30px;text-align:center"><u>P</u>rint</div>
<div class="a" style="left:1191px;top:682px;width:80px;height:30px;background:#3d3d3d;color:#fff;font-size:12.5px;font-weight:700;line-height:30px;text-align:center;letter-spacing:-0.8px">Export</div>
<div class="a" style="left:1277px;top:682px;width:80px;height:30px;background:#5aab3b;color:#fff;font-size:12.5px;font-weight:700;line-height:30px;text-align:center;letter-spacing:-0.8px"><u>E</u>xit</div>
<div class="a" style="left:1073px;top:652.5px;font-size:19px;line-height:20px;color:rgba(165,165,165,0.74);letter-spacing:0.4px">Activate Windows</div>
<div class="a" style="left:1073px;top:676.8px;font-size:15px;line-height:16px;color:rgba(165,165,165,0.74)">Go to Settings to activate Windows.</div>
<!-- bottom taskbar strip -->
<div class="a" style="left:0;top:728px;width:48px;height:2px;background:#1e2a31"></div>
<div class="a" style="left:336px;top:728px;width:1030px;height:2px;background:#1e2a31"></div>
</body></html>
